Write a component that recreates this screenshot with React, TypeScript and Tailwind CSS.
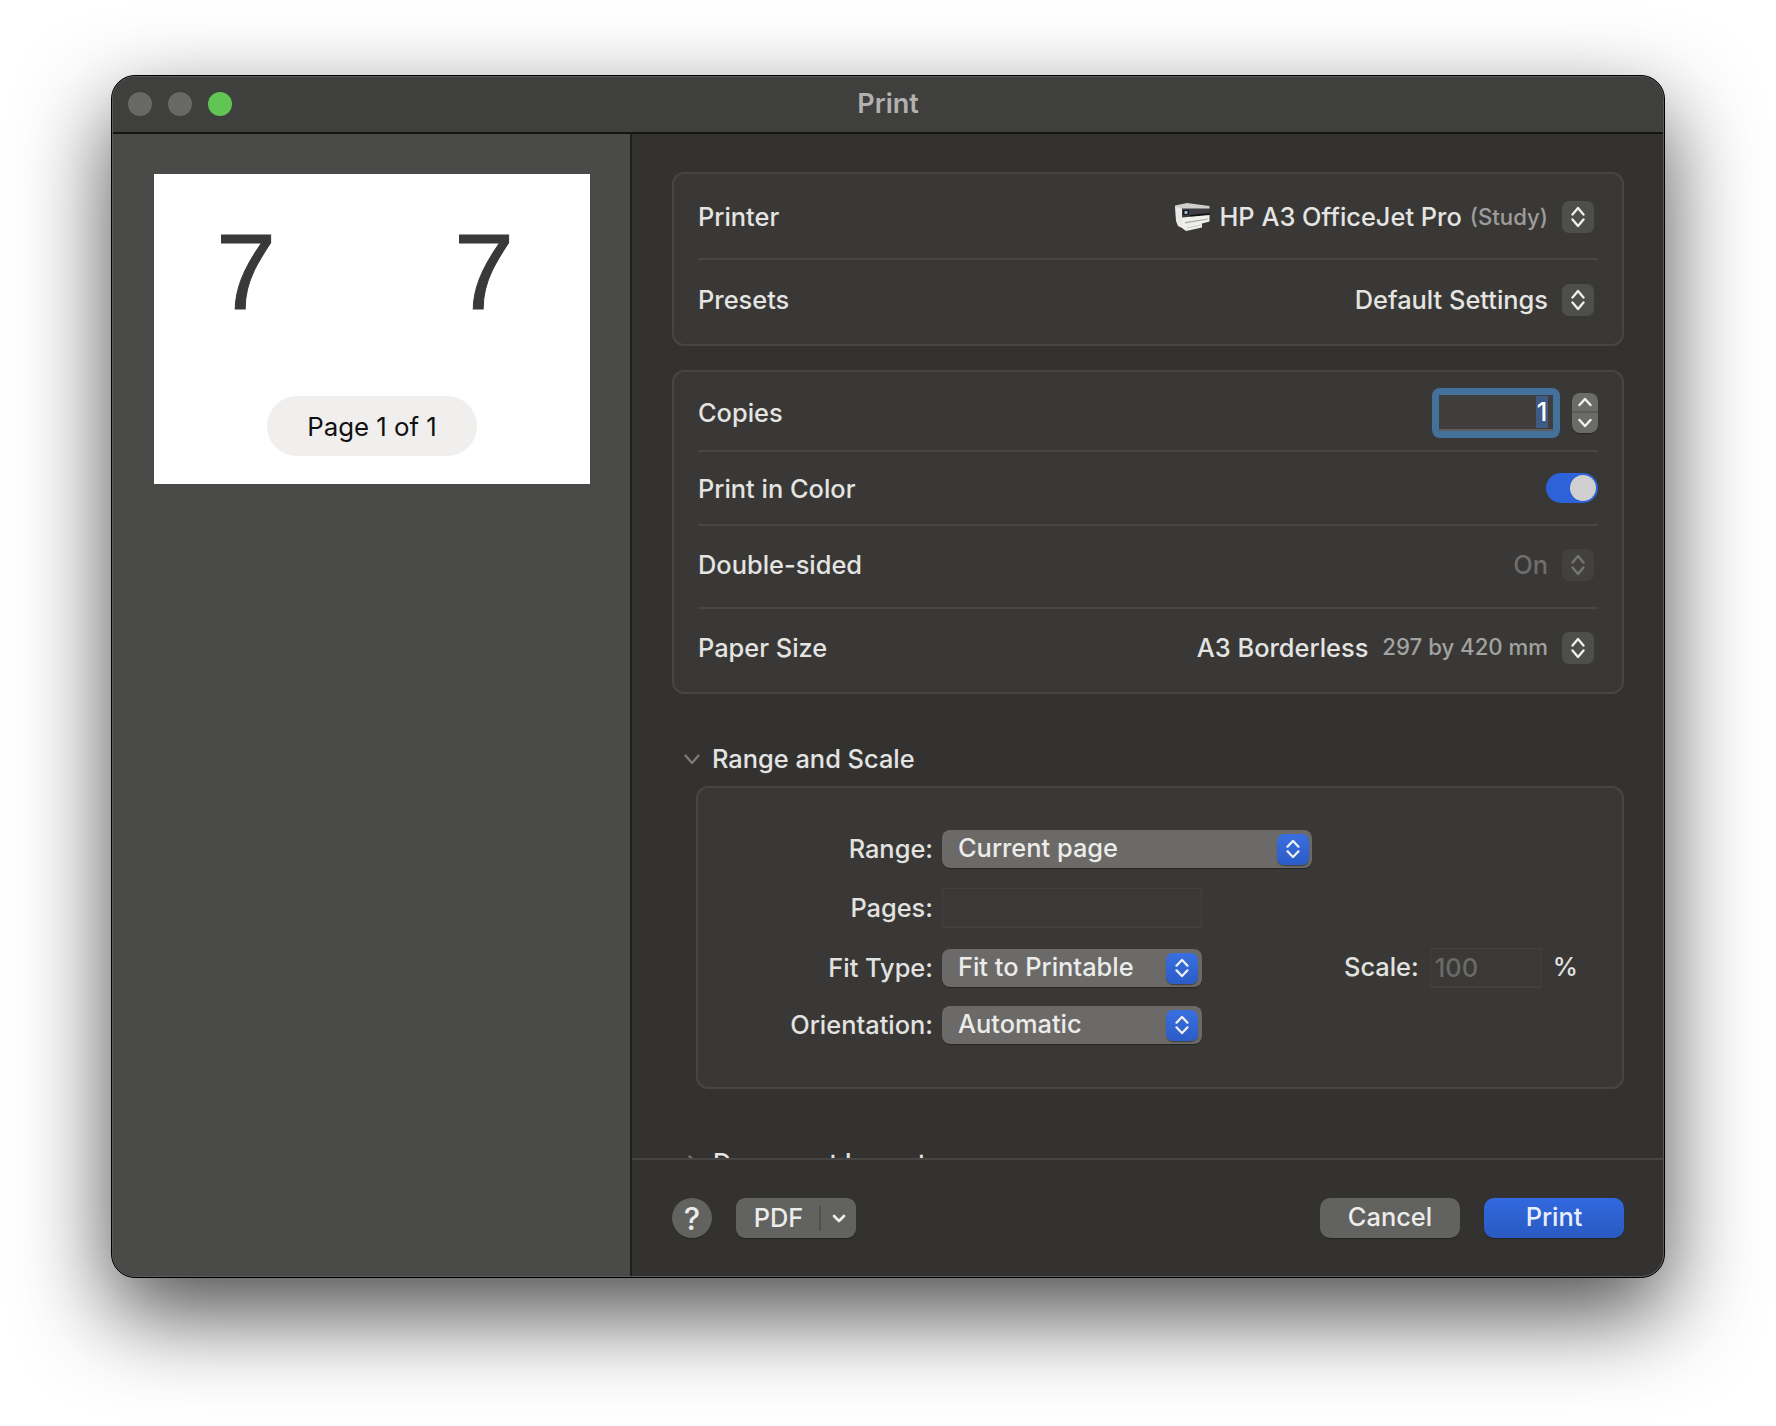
import type { ReactNode } from 'react';

const Updown = ({ color = '#f0f0ee', w = 14, h = 22 }: { color?: string; w?: number; h?: number }) => (
  <svg width={w} height={h} viewBox="0 0 14 22" preserveAspectRatio="none" fill="none" stroke={color} strokeWidth="2.3" strokeLinecap="round" strokeLinejoin="round">
    <path d="M1.5 8.5 7 2l5.5 6.5" />
    <path d="M1.5 13.5 7 20l5.5-6.5" />
  </svg>
);

function PopButton({ disabled }: { disabled?: boolean }) {
  return (
    <div className={`w-[32px] h-[32px] rounded-[7px] flex items-center justify-center ml-[14px] mr-[4px] ${disabled ? 'bg-[#42413f]' : 'bg-[#4e4e4c]'}`}>
      <Updown color={disabled ? '#767674' : '#f0f0ee'} />
    </div>
  );
}

function PrinterIcon() {
  return (
    <svg width="35" height="28" viewBox="0 0 35 28" className="mr-[9px]">
      <path d="M0 2.5 12 0 34.5 3 34.5 6 7 6 0 5Z" fill="#cfcfcd" />
      <path d="M0 4 7 5.5 7 25 3 23 1 18Z" fill="#e9e9e7" />
      <path d="M7 5.5 34.5 5.5 34.5 12 7 14.5Z" fill="#3c3e42" />
      <rect x="8" y="7" width="6" height="5" fill="#17181b" />
      <rect x="9.5" y="8" width="3" height="3" fill="#9fb9cf" />
      <path d="M15 12 34.5 10 34.5 12 15 14.5Z" fill="#111214" />
      <path d="M7 14.5 34.5 12 34.5 18.5 27 20.5 27 24.5 11 28 7 25Z" fill="#efefed" />
      <path d="M10 19 33 15.5 33 16.5 10 20.5Z" fill="#a9a9a7" />
      <path d="M12 24.5 26 21.5 26 22.5 12 25.5Z" fill="#c8c8c6" />
    </svg>
  );
}

function Popup({ label, width, wide }: { label: string; width: string; wide?: boolean }) {
  return (
    <div className={`${width} h-[38px] rounded-[8px] bg-[#6b6a68] shadow-[0_1px_1px_rgba(0,0,0,0.35)] flex items-center justify-between pl-[16px] ${wide ? 'pr-[3px]' : 'pr-[4px]'} shrink-0`}>
      <span className="text-[#ececea] mt-[-2px]">{label}</span>
      <div className="w-[32px] h-[31px] rounded-[7px] bg-gradient-to-b from-[#3a6fe0] to-[#2b5cc8] shadow-[0_1px_1px_rgba(0,0,0,0.4)] flex items-center justify-center">
        <Updown w={14} h={20} />
      </div>
    </div>
  );
}

function FormRow({ label, children, className = '' }: { label: string; children: ReactNode; className?: string }) {
  return (
    <div className={`flex items-center ${className}`}>
      <span className="w-[235px] text-right mr-[9px] shrink-0 text-[#e2e2e0]">{label}</span>
      {children}
    </div>
  );
}

function Row({ className, label, children, divider = true }: { className: string; label: string; children: ReactNode; divider?: boolean }) {
  return (
    <div className={`${className} mx-[24px] flex items-center justify-between text-[#e4e4e2] ${divider ? 'border-b-2 border-[#474644]' : ''}`}>
      <span>{label}</span>
      <div className="flex items-center">{children}</div>
    </div>
  );
}

function FooterButton({ label, primary }: { label: string; primary?: boolean }) {
  return (
    <div className={`w-[140px] h-[40px] rounded-[10px] flex items-center justify-center pb-[2px] shadow-[0_1px_1px_rgba(0,0,0,0.3)] ${primary ? 'bg-gradient-to-b from-[#3269e0] to-[#2a5ac2] text-[#e9eefb]' : 'bg-[#626260] text-[#ececea]'}`}>
      {label}
    </div>
  );
}

export default function App() {
  return (
    <div className="w-[1776px] h-[1426px] bg-white overflow-hidden pt-[75px] pl-[111px] font-['Inter',sans-serif] text-[25.4px] font-[450] leading-none">
      <div className="w-[1554px] h-[1203px] rounded-[24px] border border-black bg-[#333231] shadow-[0_36px_90px_rgba(0,0,0,0.7)]">
        <div className="h-full rounded-[23px] border border-[#5a5a58] overflow-hidden flex flex-col">
          {/* title bar */}
          <div className="h-[57px] shrink-0 bg-[#3f3f3d] border-b-2 border-[#141413] grid grid-cols-[1fr_auto_1fr] items-center px-[15px]">
            <div className="flex gap-[16px] mb-[2px]">
              <div className="w-[24px] h-[24px] rounded-full bg-[#686866]" />
              <div className="w-[24px] h-[24px] rounded-full bg-[#686866]" />
              <div className="w-[24px] h-[24px] rounded-full bg-[#61c554]" />
            </div>
            <span className="font-semibold text-[27px] text-[#b1b1af] pb-[3px]">Print</span>
            <div />
          </div>

          <div className="flex-1 flex min-h-0">
            {/* preview sidebar */}
            <aside className="w-[519px] shrink-0 bg-[#4a4a48] border-r-2 border-[#1f1f1e] pt-[40px] pl-[41px]">
              <div className="w-[436px] h-[310px] bg-white flex flex-col">
                <div className="flex justify-between pl-[62px] pr-[76px] pt-[44px] font-['Liberation_Sans',sans-serif] font-normal text-[108px] leading-[108px] text-[#3a3839] [-webkit-text-stroke:1px_#3a3839]">
                  <span>7</span>
                  <span>7</span>
                </div>
                <div className="mt-[70px] mx-auto w-[210px] h-[60px] rounded-full bg-[#f0efee] flex items-center justify-center pt-[2px] text-[25.8px] font-normal text-[#111]">
                  Page 1 of 1
                </div>
              </div>
            </aside>

            {/* settings */}
            <main className="flex-1 flex flex-col min-w-0">
              <div className="h-[1024px] shrink-0 overflow-hidden pt-[38px] pl-[40px] pr-[39px]">
                <section className="w-[952px] h-[174px] rounded-[12px] border-2 border-[#474644] bg-[#393836]">
                  <Row className="h-[86px] pt-[2px]" label="Printer">
                    <PrinterIcon />
                    <span>HP A3 OfficeJet Pro</span>
                    <span className="ml-[8px] text-[22.2px] text-[#9c9c9a]">(Study)</span>
                    <PopButton />
                  </Row>
                  <Row className="h-[85px] pb-[6px]" label="Presets" divider={false}>
                    <span>Default Settings</span>
                    <PopButton />
                  </Row>
                </section>

                <section className="w-[952px] h-[324px] mt-[24px] rounded-[12px] border-2 border-[#474644] bg-[#393836]">
                  <Row className="h-[80px] pt-[3px]" label="Copies">
                    <div className="w-[128px] h-[50px] rounded-[8px] bg-[#44719c] p-[7px]">
                      <div className="h-full bg-[#3f3e3c] border-b-2 border-[#5f5e5c] flex justify-end pr-[5px] pt-[1px]">
                        <span className="w-[12px] h-[32px] bg-[#3f5a85] text-white flex items-center justify-center">1</span>
                      </div>
                    </div>
                    <div className="w-[26px] h-[40px] ml-[12px] rounded-[8px] bg-[#6b6b69] flex flex-col items-center divide-y-2 divide-[#5b5b59] shadow-[0_1px_1px_rgba(0,0,0,0.3)]">
                      <div className="h-[20px] w-full flex items-center justify-center">
                        <svg width="14" height="10" viewBox="0 0 14 10" fill="none" stroke="#f0f0ee" strokeWidth="2.4" strokeLinecap="round" strokeLinejoin="round"><path d="M1.5 8 7 2l5.5 6" /></svg>
                      </div>
                      <div className="h-[20px] w-full flex items-center justify-center">
                        <svg width="14" height="10" viewBox="0 0 14 10" fill="none" stroke="#f0f0ee" strokeWidth="2.4" strokeLinecap="round" strokeLinejoin="round"><path d="M1.5 2 7 8l5.5-6" /></svg>
                      </div>
                    </div>
                  </Row>
                  <Row className="h-[74px] pt-[2px]" label="Print in Color">
                    <div className="w-[52px] h-[30px] rounded-full bg-[#2d62d9] flex items-center justify-end pr-[2px] mb-[2px]">
                      <div className="w-[26px] h-[26px] rounded-full bg-[#d0d0d0]" />
                    </div>
                  </Row>
                  <Row className="h-[83px] pb-[4px]" label="Double-sided">
                    <span className="text-[#6e6e6c]">On</span>
                    <PopButton disabled />
                  </Row>
                  <Row className="h-[83px] pb-[6px]" label="Paper Size" divider={false}>
                    <span>A3 Borderless</span>
                    <span className="ml-[14px] text-[22.2px] text-[#a2a2a0]">297 by 420 mm</span>
                    <PopButton />
                  </Row>
                </section>

                {/* Range and Scale */}
                <div className="mt-[45px] h-[40px] flex items-center text-[#e4e4e2]">
                  <svg width="16" height="11" viewBox="0 0 16 11" fill="none" stroke="#7c7c7a" strokeWidth="2.2" strokeLinecap="round" strokeLinejoin="round" className="ml-[12px] mr-[12px]">
                    <path d="M1.5 1.5 8 9l6.5-7.5" />
                  </svg>
                  <span>Range and Scale</span>
                </div>
                <section className="ml-[24px] mt-[7px] w-[928px] h-[303px] rounded-[12px] border-2 border-[#474644] bg-[#393836] pt-[42px] flex flex-col gap-[20px]">
                  <FormRow label="Range:">
                    <Popup label="Current page" width="w-[370px]" wide />
                  </FormRow>
                  <FormRow label="Pages:">
                    <div className="w-[260px] h-[40px] bg-[#3a3937] border border-[#41403e] border-b-2" />
                  </FormRow>
                  <FormRow label="Fit Type:" className="h-[40px]">
                    <Popup label="Fit to Printable" width="w-[260px]" />
                    <span className="ml-[142px] mr-[11px] pb-[2px] text-[#e2e2e0]">Scale:</span>
                    <div className="w-[112px] h-[40px] bg-[#3a3937] border border-[#41403e] border-b-2 flex items-center pl-[4px] text-[#6a6a68]">100</div>
                    <span className="ml-[11px] pb-[2px] text-[#e2e2e0]">%</span>
                  </FormRow>
                  <FormRow label="Orientation:" className="mt-[-2px]">
                    <Popup label="Automatic" width="w-[260px]" />
                  </FormRow>
                </section>

                {/* Document Layout, cut by the footer */}
                <div className="mt-[54px] h-[40px] flex items-center text-[#e4e4e2]">
                  <svg width="11" height="16" viewBox="0 0 11 16" fill="none" stroke="#7c7c7a" strokeWidth="2.2" strokeLinecap="round" strokeLinejoin="round" className="ml-[16px] mr-[14px]">
                    <path d="M1.5 1.5 9 8l-7.5 6.5" />
                  </svg>
                  <span>Document Layout</span>
                </div>
              </div>

              <footer className="flex-1 border-t-2 border-[#464543] pt-[38px] pl-[40px] pr-[39px] flex items-start">
                <div className="w-[40px] h-[40px] rounded-full bg-[#626260] text-[#ececea] text-[31px] font-medium flex items-center justify-center shadow-[0_1px_1px_rgba(0,0,0,0.3)]">?</div>
                <div className="ml-[24px] w-[120px] h-[40px] rounded-[9px] bg-[#626260] text-[#ececea] flex items-center shadow-[0_1px_1px_rgba(0,0,0,0.3)]">
                  <span className="w-[85px] text-center pl-[2px] border-r-2 border-[#4f4f4d] leading-[24px] pb-[1px]">PDF</span>
                  <svg width="14" height="9" viewBox="0 0 14 9" fill="none" stroke="#f0f0ee" strokeWidth="2.6" strokeLinecap="round" strokeLinejoin="round" className="ml-[11px]">
                    <path d="M2 2 7 7l5-5" />
                  </svg>
                </div>
                <div className="ml-auto flex gap-[24px]">
                  <FooterButton label="Cancel" />
                  <FooterButton label="Print" primary />
                </div>
              </footer>
            </main>
          </div>
        </div>
      </div>
    </div>
  );
}
